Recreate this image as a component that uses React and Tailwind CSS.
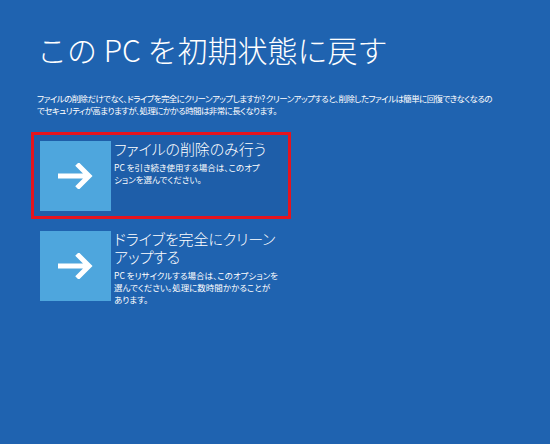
import React from "react";

const Arrow = () => (
  <svg width="36" height="26" viewBox="0 0 36 26" fill="none">
    <path
      d="M0 13 H31 M19 1 L31 13 L19 25"
      stroke="#ffffff"
      strokeWidth="5"
      strokeLinejoin="miter"
    />
  </svg>
);

const Option = ({ selected, title, lines }) => (
  <div
    className={
      "flex w-[260px] border-[3px] pl-[6px] pt-[6px] pb-[5px] " +
      (selected ? "border-[#e5141e] bg-[#1e5ea9]" : "border-transparent")
    }
  >
    <div className="w-[71px] h-[70px] shrink-0 bg-[#4ea6dd] flex items-center justify-center">
      <Arrow />
    </div>
    <div className="pl-[3px] -mt-[1px] text-white [font-feature-settings:'palt']">
      <div className="text-[15px] leading-[18px] font-light tracking-[-0.1px] whitespace-nowrap">
        {title.map((t, i) => (
          <div key={i}>{t}</div>
        ))}
      </div>
      <div className="mt-[3px] text-[8.5px] leading-[12px] whitespace-nowrap">
        {lines.map((t, i) => (
          <div key={i}>{t}</div>
        ))}
      </div>
    </div>
  </div>
);

export default function App() {
  return (
    <div
      className="w-[550px] h-[444px] bg-[#1f63b0] text-white overflow-hidden"
      style={{ fontFamily: '"Noto Sans CJK JP", "Noto Sans", sans-serif' }}
    >
      <div className="pl-[37px] pt-[34px]">
        <h1 className="text-[30px] leading-[30px] font-light whitespace-nowrap">
          この PC を初期状態に戻す
        </h1>
        <div className="mt-[28px] text-[8.5px] leading-[12px] tracking-[-0.6px] [font-feature-settings:'palt'] whitespace-nowrap">
          <div>
            ファイルの削除だけでなく、ドライブを完全にクリーンアップしますか? クリーンアップすると、削除したファイルは簡単に回復できなくなるの
          </div>
          <div>でセキュリティが高まりますが、処理にかかる時間は非常に長くなります。</div>
        </div>
      </div>
      <div className="ml-[31px] mt-[16px] flex flex-col gap-[3px]">
        <Option
          selected
          title={["ファイルの削除のみ行う"]}
          lines={["PC を引き続き使用する場合は、このオプ", "ションを選んでください。"]}
        />
        <Option
          title={["ドライブを完全にクリーン", "アップする"]}
          lines={[
            "PC をリサイクルする場合は、このオプションを",
            "選んでください。処理に数時間かかることが",
            "あります。",
          ]}
        />
      </div>
    </div>
  );
}
